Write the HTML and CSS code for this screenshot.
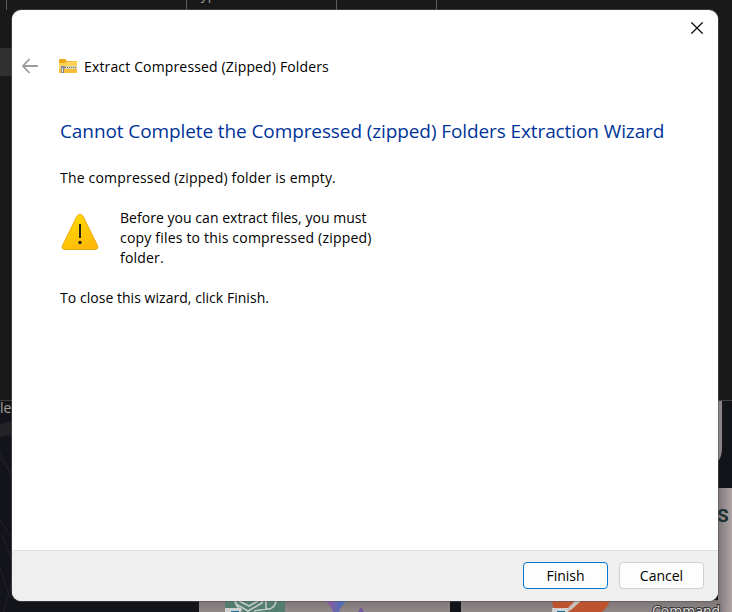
FILE: index.html
```html
<!DOCTYPE html>
<html lang="en">
<head>
<meta charset="utf-8">
<title>Extract Compressed (Zipped) Folders</title>
<link rel="stylesheet" href="styles.css">
</head>
<body>
<svg class="desktop" width="732" height="612" viewBox="0 0 732 612" aria-hidden="true">
  <defs>
    <linearGradient id="paper" x1="0" x2="1"><stop offset="0" stop-color="#7d7577"/><stop offset="1" stop-color="#b0a6a8"/></linearGradient>
    <linearGradient id="shade" x1="0" y1="0" x2="0" y2="1"><stop offset="0" stop-color="#7b7474"/><stop offset="1" stop-color="#918989"/></linearGradient>
    <linearGradient id="spark" x1="0" x2="1"><stop offset="0" stop-color="#9c559c"/><stop offset="1" stop-color="#3677bd"/></linearGradient>
  </defs>
  <rect width="732" height="612" fill="#191919"/>
  <path d="M6.500 0V10M186.500 0V10M336.500 0V10M436.500 0V10" stroke="#5b5b5b"/>
  <text x="193" y="-1" class="behind-label">Type</text>
  <rect y="48" width="12" height="28" fill="#303030"/>
  <rect y="401" width="732" height="211" fill="#131419"/>
  <path d="M0 400.500H732" stroke="#414141"/>
  <path d="M0 424L12 421V435L0 437Z" fill="#222227"/>
  <path d="M0 459L12 471M0 453L12 478M0 520L12 538M2 535L12 560M0 568L10 598M12 580L4 612" stroke="#222127"/>
  <text x="0" y="413" class="behind-label">le</text>
  <path d="M718 401H722V448Q722 457 718 461Z" fill="#8b8486"/>
  <rect x="718" y="488" width="14" height="124" fill="url(#paper)"/>
  <text x="717" y="522" class="behind-title">S</text>
  <rect x="199" y="600" width="251" height="12" fill="url(#shade)"/>
  <rect x="461" y="600" width="257" height="12" fill="url(#shade)"/>
  <rect x="225" y="600" width="60" height="12" fill="#527d6f"/>
  <path d="M236 600V604L248 611L262 603V600M239 601L249 606L258 601M266 600V610M266 609C271 610 276 606 276 600M235 599C235 605 237 608 242 610M254 611L267 609" fill="none" stroke="#c3c9c4" stroke-width="1.600"/>
  <path d="M225 612V608H241V612Z" fill="#d0d0d0"/><path d="M231 611.500H239" stroke="#1b718f"/>
  <path d="M325 601H347Q340 606 339 612H333Q331 605 325 601Z" fill="url(#spark)"/>
  <path d="M361 607L364 612H358Z" fill="#7357a0"/>
  <path d="M552 600H610Q608 607 602 612H556Q552 607 552 600Z" fill="#bd542f"/>
  <path d="M576 600H582L571 610L567 612V609Z" fill="#c7c0be"/>
  <path d="M552 612V608H568V612Z" fill="#d0d0d0"/><path d="M557 611.500H565" stroke="#1b718f"/>
  <text x="652" y="616" class="behind-shortcut">Command</text>
</svg>
<main class="dialog">
  <div class="titlebar">
    <svg class="close" width="12" height="12" viewBox="0 0 12 12" role="img" aria-label="Close"><path d="M.4.400 11.600 11.600M11.600.4.400 11.600"/></svg>
  </div>
  <header class="heading">
    <svg class="back" width="16" height="16" viewBox="0 0 16 16" role="img" aria-label="Back"><path d="M7.500 1 1 8l6.500 7M1 8h14.800"/></svg>
    <svg class="folder" width="18" height="14" viewBox="0 0 18 14" aria-hidden="true">
      <path d="M0 1Q0 0 1 0H6L8 2H17Q18 2 18 3V6H0Z" fill="#eda819"/>
      <path d="M0 4H6L8 2.500H17Q18 2.500 18 3.500V13Q18 14 17 14H1Q0 14 0 13Z" fill="#ffd25a"/>
      <path d="M0 10H18V13Q18 14 17 14H1Q0 14 0 13Z" fill="#f6bc39"/>
      <path d="M1 8.500H18" stroke="#ddd3b5" stroke-width="3"/>
      <path d="M4 8.500H18" stroke="#77746c" stroke-dasharray="1 1"/>
      <path d="M2 7H6V9.500H5V14H2.500Z" fill="#85888b"/><path d="M3.500 9V13" stroke="#ddd"/>
    </svg>
    <span class="name">Extract Compressed (Zipped) Folders</span>
  </header>
  <section class="content">
    <h1>Cannot Complete the Compressed (zipped) Folders Extraction Wizard</h1>
    <p class="wide">The compressed (zipped) folder is empty.</p>
    <div class="warning">
      <svg width="38" height="38" viewBox="0 0 38 38" aria-hidden="true">
        <defs><linearGradient id="amber" x1="0" y1="0" x2=".6" y2="1"><stop offset="0" stop-color="#ffe000"/><stop offset="1" stop-color="#ffb908"/></linearGradient></defs>
        <path d="M15.800 3.500Q19-.8 22.200 3.500L36.400 32.300Q37.800 36.300 34.300 36.500H3.700Q.2 36.300 1.600 32.300Z" fill="url(#amber)" stroke="#e8aa12"/>
        <path d="M19 11V25" stroke="#222" stroke-width="2"/><circle cx="19" cy="29.500" r="1.700" fill="#222"/>
      </svg>
      <p>Before you can extract files, you must<br><span class="wide">copy files to this compressed (zipped)</span><br><span class="wide">folder.</span></p>
    </div>
    <p>To close this wizard, click Finish.</p>
  </section>
  <footer class="actions">
    <button class="button primary">Finish</button>
    <button class="button">Cancel</button>
  </footer>
</main>
</body>
</html>
```
FILE: styles.css
```css
* { box-sizing: border-box; }
body {
  margin: 0;
  width: 732px;
  height: 612px;
  padding: 10px 14px 11px 12px;
  overflow: hidden;
  background: #191919;
  color: #000;
  font: 14px/20px "Open Sans", "Noto Sans", sans-serif;
}
.desktop { position: absolute; left: 0; top: 0; }
.behind-label { font-size: 14px; fill: #a4a098; }
.behind-title { font: bold 19px Roboto, sans-serif; fill: #17312f; }
.behind-shortcut { font-size: 14px; fill: #ddd; stroke: #333; stroke-width: 2px; paint-order: stroke; }
.dialog {
  position: relative;
  display: flex;
  flex-direction: column;
  width: 706px;
  height: 591px;
  border-radius: 9px;
  background: #fff;
  box-shadow: 0 0 0 1px rgba(85, 85, 85, .55);
  overflow: hidden;
}
.titlebar { display: flex; justify-content: flex-end; height: 46px; padding: 12px 15px 0 0; }
.close { fill: none; stroke: #111; stroke-width: 1.3; }
.heading { display: flex; align-items: center; height: 20px; padding-left: 10px; }
.back { fill: none; stroke: #9b9b9b; stroke-width: 1.8; }
.folder { margin-left: 21px; }
.name { margin: 2px 0 0 7px; white-space: nowrap; letter-spacing: .15px; }
.content { flex: 1; padding: 41px 48px 0; }
h1 { margin: 0 0 23px; color: #003399; font-size: 19px; line-height: 28px; font-weight: 400; white-space: nowrap; letter-spacing: -.1px; }
p { margin: 0; white-space: nowrap; letter-spacing: .04px; }
.wide { letter-spacing: .19px; }
.warning { display: flex; gap: 22px; margin: 20px 0; }
.warning svg { margin: 5px 0 0 1px; flex: none; }
.warning p { margin-left: -1px; }
.actions { display: flex; justify-content: flex-end; gap: 11px; height: 51px; padding: 11px 14px 0 0; border-top: 1px solid #dfdfdf; background: #efefef; }
.button { width: 85px; height: 27px; padding: 0; border: 1px solid #d0d0d0; border-radius: 4px; background: #fdfdfd; color: #000; font: inherit; }
.primary { border-color: #0078d4; }
```
